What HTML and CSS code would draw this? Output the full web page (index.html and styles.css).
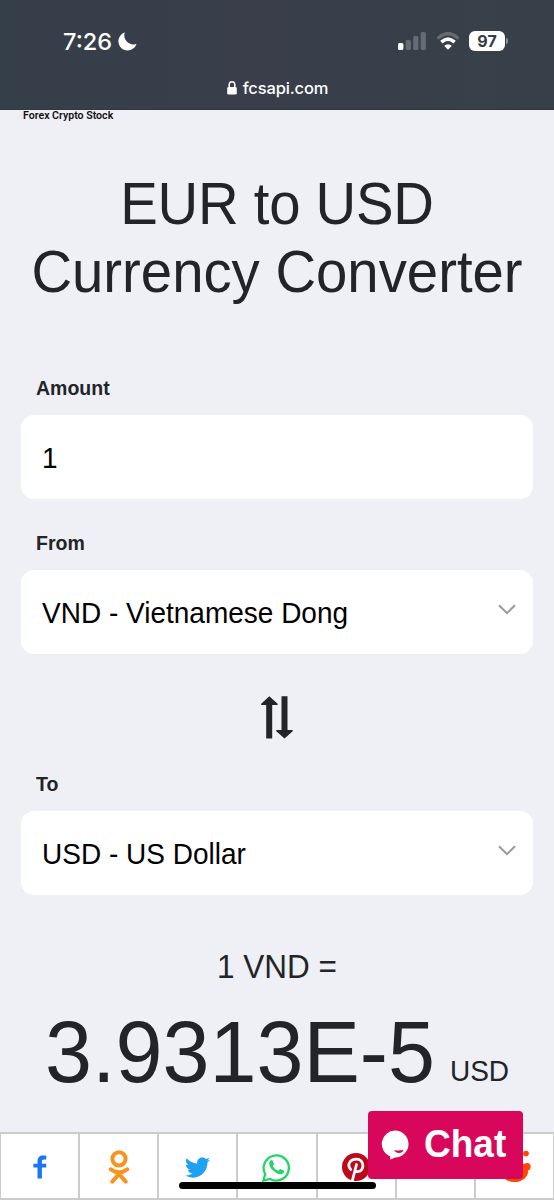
FILE: index.html
```html
<!DOCTYPE html>
<html lang="en">
<head>
<meta charset="utf-8">
<title>EUR to USD Currency Converter</title>
<link rel="stylesheet" href="styles.css">
</head>
<body>
<div class="screen">
  <header class="browser">
    <div class="status">
      <div class="clock"><span class="time">7:26</span>
        <svg class="moon" width="19" height="19" viewBox="0 0 19 19"><path d="M6.800.4C3 1.700.4 5.200.4 9.300c0 5.100 4.100 9.200 9.200 9.200 4.100 0 7.700-2.700 8.900-6.400-1.300.4-2.300.5-3.400.4-4.800-.3-8.400-3.900-8.800-8.400-.1-1.300.1-2.500.5-3.700z" fill="#fff"/></svg>
      </div>
      <div class="indicators">
        <svg width="28" height="18" viewBox="0 0 28 18"><rect x="0" y="11" width="5.400" height="7" rx="1.500" fill="#fff"/><g fill="#646b75"><rect x="7.700" y="8" width="5.200" height="10" rx="1.500"/><rect x="15.200" y="4" width="5.200" height="14" rx="1.500"/><rect x="22.700" y="0" width="5.200" height="18" rx="1.500"/></g></svg>
        <svg class="wifi" width="24" height="18" viewBox="0 0 24 18"><path d="M1.500 6.400Q12-3.200 22.500 6.400" fill="none" stroke="#646b75" stroke-width="3.400"/><path d="M5.400 10.200Q12 4.200 18.600 10.200" fill="none" stroke="#fff" stroke-width="3.600"/><path d="M8.200 13.800Q12 10.600 15.800 13.800L12 17.800z" fill="#fff"/></svg>
        <span class="battery">97</span><span class="battery-tip"></span>
      </div>
    </div>
    <div class="address">
      <svg width="10" height="14" viewBox="0 0 10 14"><path d="M2.200 7V4a2.800 3.200 0 0 1 5.600 0v3" fill="none" stroke="#fff" stroke-width="1.500"/><rect x=".2" y="6" width="9.600" height="7.600" rx="1.400" fill="#fff"/></svg>
      <span class="domain">fcsapi.com</span>
    </div>
  </header>
  <main class="page">
    <p class="tagline">Forex Crypto Stock</p>
    <h1 class="title"><span class="pair">EUR to USD</span><span>Currency Converter</span></h1>
    <div class="form">
      <div class="label">Amount</div>
      <div class="field"><span class="value">1</span></div>
      <div class="label">From</div>
      <div class="field"><span class="value">VND - Vietnamese Dong</span><svg class="chevron" width="18" height="11" viewBox="0 0 18 11"><path d="M1 1.200 9 9.200 17 1.200" fill="none" stroke="#999" stroke-width="2"/></svg></div>
      <div class="swap"><svg width="32" height="43" viewBox="0 0 32 43"><path d="M8.300.3 16.600 7.700v1.200h-5.400V42.600h-6V8.900H.2V7.700zM20.500.3h6v33.800h5.200v1.200l-8.200 7.300-8.200-7.300v-1.200h5.200z" fill="#212529"/></svg></div>
      <div class="label">To</div>
      <div class="field"><span class="value">USD - US Dollar</span><svg class="chevron" width="18" height="11" viewBox="0 0 18 11"><path d="M1 1.200 9 9.200 17 1.200" fill="none" stroke="#999" stroke-width="2"/></svg></div>
    </div>
    <div class="base">1 VND =</div>
    <div class="result"><span class="amount">3.9313E-5</span><span class="unit">USD</span></div>
  </main>
  <nav class="share">
    <a><svg width="14" height="24" viewBox="0 0 14 24"><path d="M4.500 23.500V12.600H.4V8.700h4.100V6.500C4.500 2.400 6.700.5 10 .5h3.300v4h-2c-1.700 0-2.400.7-2.400 2.300v1.900h4.300v3.900H8.900v10.900z" fill="#1877f2"/></svg></a>
    <a><svg width="22" height="34" viewBox="0 0 22 34"><g fill="none" stroke="#f7931e" stroke-width="4" stroke-linecap="round"><circle cx="11" cy="8.800" r="6.600"/><path d="M2.800 19.300Q11 25.300 19.200 19.300M11 24 4.300 31.600M11 24 17.700 31.600"/></g></svg></a>
    <a><svg width="25" height="25" viewBox="0 0 24 24"><path d="M23.950 4.570a10 10 0 0 1-2.820.77 4.960 4.960 0 0 0 2.160-2.720c-.95.55-2 .96-3.130 1.180a4.920 4.920 0 0 0-8.380 4.480C7.690 8.100 4.070 6.130 1.640 3.160a4.920 4.920 0 0 0 1.520 6.570 4.900 4.900 0 0 1-2.230-.62v.06a4.920 4.920 0 0 0 3.950 4.830 5 5 0 0 1-2.210.08 4.940 4.940 0 0 0 4.600 3.420A9.870 9.870 0 0 1 0 19.540a13.990 13.990 0 0 0 7.550 2.210c9.050 0 14-7.500 14-13.980 0-.21 0-.42-.02-.63a9.940 9.940 0 0 0 2.420-2.570z" fill="#1da1f2"/></svg></a>
    <a><svg width="29" height="29" viewBox="0 0 29 29"><path d="M1.300 27.700 3.200 21A12.600 12.600 0 1 1 8 25.900z" fill="none" stroke="#25d366" stroke-width="2.300"/><path d="M10.500 7.500c-.6-.7-1.500-.5-2.300.4-2.200 2.700-.5 6 2.200 8.900 3.100 3.300 7.200 5.600 10 4 1.500-.8 1.900-2.200 1.600-3l-3.400-1.700c-.9-.4-1.400.9-2.300 1.700-2.500-.9-4.200-2.600-5.500-4.900.9-1.200 1.500-1.600 1.100-2.500z" fill="#25d366"/></svg></a>
    <a><svg width="28" height="28" viewBox="0 0 28 28"><circle cx="14" cy="14" r="14" fill="#bd081c"/><path d="M8.700 16.400C4.500 12 8 6.100 14.400 6.100c8.200 0 8.500 12.200 1.500 12.500-1.700 0-2.600-1-2.600-1M14.500 11.500 10.500 27" fill="none" stroke="#fff" stroke-width="2.800" stroke-linecap="round"/></svg></a>
    <a></a>
    <a><svg width="34" height="34" viewBox="0 0 34 34"><circle cx="29" cy="3.600" r="2.800" fill="#ff4500"/><ellipse cx="17.500" cy="21.600" rx="13.500" ry="10.500" fill="#ff4500"/><circle cx="30" cy="16.700" r="3.700" fill="#ff4500"/></svg></a>
  </nav>
  <div class="chat">
    <svg width="28" height="30" viewBox="0 0 28 30"><path d="M14 .5a13.500 13.500 0 0 1 0 27q-3 1.600-5 2 .4-2 .2-3A13.500 13.500 0 0 1 14 .5z" fill="#fff"/><path d="M13 20q5 1.200 9.500-.3-1 3.300-4.500 3.300-3.500 0-5-3z" fill="#d9075b"/></svg>
    <span class="chat-label">Chat</span>
  </div>
  <div class="home-bar"></div>
</div>
</body>
</html>
```
FILE: styles.css
```css
* { box-sizing: border-box; }
body { margin: 0; background: #eff0f5; color: #212529; font-family: "Liberation Sans", Arial, sans-serif; }
.screen { position: relative; display: flex; flex-direction: column; width: 554px; height: 1200px; overflow: hidden; }
.browser { flex: none; height: 110px; background: linear-gradient(90deg, #353f49, #393e4a 45%, #374049); color: #fff; font-family: Inter, sans-serif; border-bottom: 1px solid #303840; }
.status { display: flex; justify-content: space-between; height: 76px; padding: 6px 46px 0 63px; align-items: center; }
.clock { display: flex; align-items: center; gap: 6px; padding-top: 1px; }
.time { font-size: 23.500px; font-weight: 500; line-height: 26px; }
.indicators { display: flex; align-items: center; }
.wifi { margin: 0 9px 0 10px; }
.battery { width: 36px; height: 20px; border-radius: 6px; background: #fff; color: #343d47; font-size: 16px; font-weight: 700; line-height: 20px; text-align: center; }
.battery-tip { width: 2px; height: 6px; margin-left: 1px; border-radius: 0 2px 2px 0; background: #8b9198; }
.address { display: flex; justify-content: center; align-items: center; gap: 6px; height: 24px; padding-left: 1px; }
.domain { font-size: 16.500px; font-weight: 500; line-height: 24px; letter-spacing: -.15px; }
.page { flex: 1; }
.tagline { height: 14px; margin: 0; padding-left: 23px; color: #111; font: 600 10.600px/11px Roboto, sans-serif; }
.title { display: flex; flex-direction: column; height: 135px; margin: 46px 0 0; font-size: 56.300px; font-weight: 400; line-height: 67.500px; text-align: center; white-space: nowrap; }
.title span, .value, .amount, .unit, .base { display: block; transform: scaleY(1.04); }
.title .pair { letter-spacing: -.25px; }
.form { padding: 69px 21px 0; }
.label { height: 41px; padding-left: 15px; font-size: 19.500px; font-weight: 700; line-height: 28px; }
.field { display: flex; justify-content: space-between; align-items: center; height: 84px; margin-bottom: 30px; padding: 3px 17px 0 21px; border-radius: 13px; background: #fff; color: #000; font-size: 28px; }
.value { white-space: nowrap; }
.chevron { margin-top: -8px; }
.swap { display: flex; justify-content: center; height: 86px; padding-top: 12px; }
.base { margin-top: 54px; font-size: 31.500px; line-height: 36px; text-align: center; }
.result { display: flex; justify-content: center; align-items: baseline; gap: 15px; height: 110px; margin-top: 17px; white-space: nowrap; }
.amount { font-size: 84.500px; line-height: 100px; }
.unit { font-size: 28px; }
.share { flex: none; display: grid; grid-template-columns: repeat(7, 1fr); height: 68px; border: 1px solid #ccc; border-width: 1px 0; }
.share a { display: flex; align-items: center; justify-content: center; border: 1px solid #ccc; background: #fff; padding-top: 2px; }
.chat { position: absolute; left: 368px; top: 1111px; display: flex; align-items: center; gap: 15px; width: 155px; height: 68px; padding-left: 13px; border-radius: 4px; background: #d9075b; color: #fff; }
.chat-label { font-size: 37px; font-weight: 700; transform: scaleY(1.03); }
.home-bar { position: absolute; left: 179px; top: 1182px; width: 197px; height: 7px; border-radius: 4px; background: #000; }
```
